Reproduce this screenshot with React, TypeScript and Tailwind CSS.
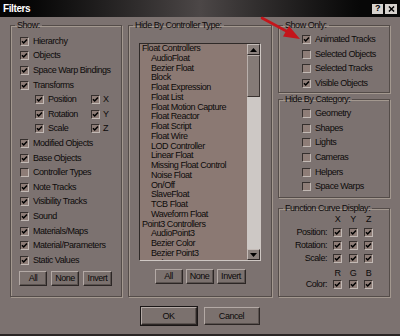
import React from 'react';

const font = "font-['Liberation_Sans',Arial,sans-serif]";
const etched = 'min-w-0 border border-[#544c49] shadow-[1px_1px_0_#a3988f,inset_1px_1px_0_#a3988f]';

const Check = ({ on }: { on: boolean }) => (
    <span className="relative inline-block w-[9px] h-[9px] shrink-0 bg-[#8e7d77] border border-t-[#352f2d] border-l-[#352f2d] border-b-[#c2b9b4] border-r-[#c2b9b4]">
        {on && (
            <svg viewBox="0 0 7 7" className="absolute inset-0 w-[7px] h-[7px]">
                <path d="M1 3.2 L2.7 5 L6 1.4" fill="none" stroke="#000" strokeWidth="1.5" />
            </svg>
        )}
    </span>
);

const Row = ({ label, on = true }: { label: string; on?: boolean }) => (
    <div className="flex items-center gap-1 h-[14.6px]">
        <Check on={on} />
        <span className="whitespace-nowrap">{label}</span>
    </div>
);

const Btn = ({ children, className = '' }: { children: React.ReactNode; className?: string }) => (
    <div className={`flex items-center justify-center bg-[#7b716e] border border-t-[#b3a9a5] border-l-[#b3a9a5] border-b-[#2c2625] border-r-[#2c2625] shadow-[inset_-1px_-1px_0_#5a524f] ${className}`}>
        {children}
    </div>
);

const Group = ({ title, className = '', children }: { title: string; className?: string; children: React.ReactNode }) => (
    <fieldset className={`${etched} ${className}`}>
        <legend className="ml-[4px] px-[2px] leading-[11px] whitespace-nowrap">{title}</legend>
        {children}
    </fieldset>
);

const controllers: [string, boolean][] = [
    ['Float Controllers', false],
    ['AudioFloat', true],
    ['Bezier Float', true],
    ['Block', true],
    ['Float Expression', true],
    ['Float List', true],
    ['Float Motion Capture', true],
    ['Float Reactor', true],
    ['Float Script', true],
    ['Float Wire', true],
    ['LOD Controller', true],
    ['Linear Float', true],
    ['Missing Float Control', true],
    ['Noise Float', true],
    ['On/Off', true],
    ['SlaveFloat', true],
    ['TCB Float', true],
    ['Waveform Float', true],
    ['Point3 Controllers', false],
    ['AudioPoint3', true],
    ['Bezier Color', true],
    ['Bezier Point3', true],
    ['Color RGB', true],
];

const Arrow = ({ up }: { up: boolean }) => (
    <div className="flex items-center justify-center h-[11px] bg-[#8a807c] border border-t-[#c4bbb7] border-l-[#c4bbb7] border-b-[#2c2625] border-r-[#2c2625]">
        <svg viewBox="0 0 7 4" className="w-[7px] h-[4px]">
            <path d={up ? 'M0 4 L3.5 0 L7 4 Z' : 'M0 0 L3.5 4 L7 0 Z'} fill="#000" />
        </svg>
    </div>
);

const FcRow = ({ label }: { label: string }) => (
    <div className="flex items-center h-[13px]">
        <span className="w-[48px] text-right">{label}</span>
        <div className="flex gap-[6.5px] ml-[6px]">
            <Check on />
            <Check on />
            <Check on />
        </div>
    </div>
);

const FcHead = ({ letters }: { letters: string[] }) => (
    <div className="flex items-center h-[10px] pl-[54px] gap-[6.5px]">
        {letters.map((l) => (
            <span key={l} className="w-[9px] text-center">{l}</span>
        ))}
    </div>
);

export default function App() {
    return (
        <div className={`relative w-[400px] h-[336px] overflow-hidden bg-[#7c7270] text-[9px] tracking-[-0.45px] leading-[11px] text-[#0c0a0a] border-b-2 border-b-[#2a2524] ${font}`}>
            {/* title bar */}
            <div className="flex items-center justify-between h-[17px] pl-[3px] pr-[3px] bg-linear-to-r from-[#050505] from-[6%] via-[#4c4747] to-[#070707] to-[90%]">
                <span className="text-white font-bold text-[10px] tracking-[-0.4px]">Filters</span>
                <div className="flex gap-[2px]">
                    <div className="flex items-center justify-center w-[11px] h-[10px] bg-[#d6d2ce] text-black font-bold text-[9px] leading-none">?</div>
                    <div className="flex items-center justify-center w-[12px] h-[10px] bg-[#d6d2ce]">
                        <svg viewBox="0 0 8 7" className="w-[7px] h-[6px]">
                            <path d="M1 0.5 L7 6.5 M7 0.5 L1 6.5" stroke="#000" strokeWidth="1.6" />
                        </svg>
                    </div>
                </div>
            </div>

            <div className="flex gap-[6px] px-[10px] pt-[3px]">
                {/* Show */}
                <Group title="Show:" className="w-[112px] h-[277px]">
                    <div className="flex flex-col pl-[9px] pt-[3px]">
                        <Row label="Hierarchy" />
                        <Row label="Objects" />
                        <Row label="Space Warp Bindings" />
                        <Row label="Transforms" />
                        {[['Position', 'X'], ['Rotation', 'Y'], ['Scale', 'Z']].map(([a, b]) => (
                            <div key={a} className="flex items-center h-[14.6px] pl-[15px]">
                                <div className="flex items-center gap-1 w-[56px]">
                                    <Check on />
                                    <span>{a}</span>
                                </div>
                                <div className="flex items-center gap-[3px]">
                                    <Check on />
                                    <span>{b}</span>
                                </div>
                            </div>
                        ))}
                        <Row label="Modified Objects" />
                        <Row label="Base Objects" />
                        <Row label="Controller Types" on={false} />
                        <Row label="Note Tracks" />
                        <Row label="Visibility Tracks" />
                        <Row label="Sound" />
                        <Row label="Materials/Maps" />
                        <Row label="Material/Parameters" />
                        <Row label="Static Values" />
                    </div>
                    <div className="flex justify-center gap-1 mt-[3px] pr-[1px]">
                        <Btn className="w-[28px] h-[15px]">All</Btn>
                        <Btn className="w-[28px] h-[15px]">None</Btn>
                        <Btn className="w-[29px] h-[15px]">Invert</Btn>
                    </div>
                </Group>

                {/* Hide By Controller Type */}
                <Group title="Hide By Controller Type:" className="w-[144px] h-[277px]">
                    <div className="px-[10px] pt-[12px]">
                        <div className="flex h-[218px] bg-[#8b7973] border border-t-[#2f2a28] border-l-[#2f2a28] border-b-[#cfc8c4] border-r-[#cfc8c4] overflow-hidden">
                            <div className="flex-1 flex flex-col pl-[2px]">
                                {controllers.map(([name, indent]) => (
                                    <div key={name} className={`h-[9.75px] leading-[9.75px] shrink-0 whitespace-nowrap ${indent ? 'pl-[9px]' : ''}`}>
                                        {name}
                                    </div>
                                ))}
                            </div>
                            <div className="flex flex-col w-[13px] bg-[#cdc8c5]">
                                <Arrow up />
                                <div className="h-[42px] bg-[#857b77] border border-t-[#b9b0ac] border-l-[#b9b0ac] border-b-[#3a3331] border-r-[#3a3331]" />
                                <div className="flex-1" />
                                <Arrow up={false} />
                            </div>
                        </div>
                    </div>
                    <div className="flex justify-center gap-[3px] mt-[8px]">
                        <Btn className="w-[28px] h-[15px]">All</Btn>
                        <Btn className="w-[28px] h-[15px]">None</Btn>
                        <Btn className="w-[29px] h-[15px]">Invert</Btn>
                    </div>
                </Group>

                {/* right column */}
                <div className="flex flex-col w-[112px]">
                    <Group title="Show Only:" className="h-[73px]">
                        <div className="flex flex-col pl-[23px] pt-[1.5px]">
                            <Row label="Animated Tracks" />
                            <Row label="Selected Objects" on={false} />
                            <Row label="Selected Tracks" on={false} />
                            <Row label="Visible Objects" />
                        </div>
                    </Group>
                    <Group title="Hide By Category:" className="h-[104px] mt-px">
                        <div className="flex flex-col pl-[23px] pt-[1.5px]">
                            <Row label="Geometry" on={false} />
                            <Row label="Shapes" on={false} />
                            <Row label="Lights" on={false} />
                            <Row label="Cameras" on={false} />
                            <Row label="Helpers" on={false} />
                            <Row label="Space Warps" on={false} />
                        </div>
                    </Group>
                    <Group title="Function Curve Display:" className="h-[94px] mt-[5px]">
                        <div className="flex flex-col">
                            <FcHead letters={['X', 'Y', 'Z']} />
                            <div className="mt-[2px]">
                                <FcRow label="Position:" />
                                <FcRow label="Rotation:" />
                                <FcRow label="Scale:" />
                            </div>
                            <div className="mt-[3px]">
                                <FcHead letters={['R', 'G', 'B']} />
                            </div>
                            <FcRow label="Color:" />
                        </div>
                    </Group>
                </div>
            </div>

            <div className="flex justify-center gap-[7px] mt-[10px]">
                <Btn className="w-[56px] h-[18px] outline outline-[#1a1616]">OK</Btn>
                <Btn className="w-[56px] h-[18px]">Cancel</Btn>
            </div>

            {/* red annotation arrow */}
            <svg viewBox="0 0 400 336" className="absolute inset-0 w-[400px] h-[336px] pointer-events-none">
                <path d="M262 18 L288 32" stroke="#c4151b" strokeWidth="2.6" strokeLinecap="round" />
                <path d="M300 39 L283 36.5 L289 26 Z" fill="#c4151b" />
            </svg>
        </div>
    );
}
